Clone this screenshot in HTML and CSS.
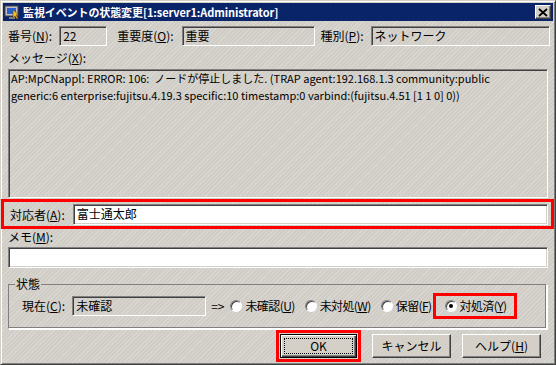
FILE: index.html
```html
<!DOCTYPE html>
<html lang="ja">
<head>
  <meta charset="UTF-8" />
  <title>監視イベントの状態変更</title>
  <link rel="stylesheet" href="styles.css">
</head>
<body>

<div class="window">
  <div class="titlebar">
    <svg class="app-icon" width="16" height="16" viewBox="0 0 16 16">
      <rect x="1" y="2" width="13" height="10" fill="#c0c0c0" stroke="#404040"/>
      <rect x="3" y="4" width="9" height="6" fill="#2a5fd0"/>
      <path d="M5 13h6v2H5z" fill="#808080"/>
      <path d="M9 6l5 4-2 1 2 3-1 1-2-3-2 2z" fill="#f0c020" stroke="#7a4a00" stroke-width="0.6"/>
    </svg>
    <span class="title">監視イベントの状態変更[1:server1:Administrator]</span>
    <span class="close-btn">
      <svg width="10" height="9" viewBox="0 0 10 9"><path d="M1 1l8 7M9 1L1 8" stroke="#000" stroke-width="1.8"/></svg>
    </span>
  </div>

  <div class="content">
    <div class="row top-row">
      <span class="lbl">番号(<u>N</u>):</span>
      <div class="field ro f-num">22</div>
      <span class="lbl lbl-sev">重要度(<u>O</u>):</span>
      <div class="field ro f-sev">重要</div>
      <span class="lbl lbl-kind">種別(<u>P</u>):</span>
      <div class="field ro f-kind">ネットワーク</div>
    </div>

    <div class="lbl caption">メッセージ(<u>X</u>):</div>
    <div class="field ro message">
      <div>AP:MpCNappl: ERROR: 106:&nbsp; ノードが停止しました. (TRAP agent:192.168.1.3 community:public</div>
      <div>generic:6 enterprise:fujitsu.4.19.3 specific:10 timestamp:0 varbind:(fujitsu.4.51 [1 1 0] 0))</div>
    </div>

    <div class="row owner-row marked">
      <span class="lbl">対応者(<u>A</u>):</span>
      <div class="field owner">富士通太郎</div>
    </div>

    <div class="lbl caption memo-cap">メモ(<u>M</u>):</div>
    <div class="field memo"></div>

    <fieldset class="group">
      <legend>状態</legend>
      <div class="row state-row">
        <span class="lbl">現在(<u>C</u>):</span>
        <div class="field ro f-state">未確認</div>
        <span class="arrow">=&gt;</span>
        <span class="radio-item"><span class="radio"></span>未確認(<u>U</u>)</span>
        <span class="radio-item"><span class="radio"></span>未対処(<u>W</u>)</span>
        <span class="radio-item"><span class="radio"></span>保留(<u>F</u>)</span>
        <span class="radio-item marked-radio"><span class="radio checked"></span>対処済(<u>Y</u>)</span>
      </div>
    </fieldset>

    <div class="buttons">
      <span class="marked-btn"><span class="btn default"><span class="focus">OK</span></span></span>
      <span class="btn">キャンセル</span>
      <span class="btn">ヘルプ(<u>H</u>)</span>
    </div>
  </div>
</div>

</body>
</html>
```

FILE: styles.css
```css
* {
  box-sizing: border-box;
}
body {
  margin: 0;
  font-family: "Noto Sans CJK JP", "DejaVu Sans", sans-serif;
  font-size: 12px;
  line-height: 14px;
  color: #000;
}
u {
  text-decoration: underline;
  text-underline-offset: 1px;
}
.window {
  width: 556px;
  height: 365px;
  background-color: #d4d0c8;
  background-image: repeating-linear-gradient(135deg, #dad7d2 0 1px, #d0cdc6 1px 3px);
  border: 1px solid;
  border-color: #d4d0c8 #404040 #404040 #d4d0c8;
  box-shadow: inset 1px 1px #fff, inset -1px -1px #808080;
  padding: 2px;
  display: flex;
  flex-direction: column;
  overflow: hidden;
}
.titlebar {
  height: 18px;
  flex-shrink: 0;
  background-color: #0a246a;
  display: flex;
  align-items: center;
  padding: 0 2px 0 1px;
}
.app-icon {
  flex-shrink: 0;
}
.title {
  color: #fff;
  font-weight: bold;
  font-size: 11px;
  letter-spacing: -0.1px;
  margin-left: 3px;
  flex-grow: 1;
  white-space: nowrap;
}
.close-btn {
  width: 16px;
  height: 14px;
  background-color: #d4d0c8;
  border: 1px solid;
  border-color: #fff #404040 #404040 #fff;
  box-shadow: inset -1px -1px #808080;
  display: flex;
  align-items: center;
  justify-content: center;
}
.content {
  padding: 5px 5px 0 5px;
  display: flex;
  flex-direction: column;
  flex-grow: 1;
}
.row {
  display: flex;
  align-items: center;
}
.lbl {
  white-space: nowrap;
}
.field {
  height: 20px;
  flex-shrink: 0;
  border: 1px solid;
  border-color: #808080 #fff #fff #808080;
  box-shadow: inset 1px 1px #404040, inset -1px -1px #d4d0c8;
  background-color: #fff;
  padding: 2px 3px;
  white-space: nowrap;
}
.field.ro {
  background-color: transparent;
}
.f-num {
  width: 48px;
  margin-left: 7px;
}
.lbl-sev {
  margin-left: 10px;
}
.f-sev {
  width: 133px;
  margin-left: 8px;
}
.lbl-kind {
  margin-left: 6px;
}
.f-kind {
  width: 179px;
  margin-left: 7px;
}
.caption {
  margin-top: 5px;
  height: 14px;
}
.message {
  height: 129px;
  margin-top: 4px;
  font-size: 11px;
  line-height: 17px;
  padding: 0 2px;
}
.marked {
  border: 3px solid #f00;
  margin: 1px -6px 0 -7px;
  padding: 2px 3px 1px 6px;
}
.owner {
  flex-grow: 1;
  height: 21px;
  margin-left: 8px;
}
.memo-cap {
  margin-top: 1px;
}
.memo {
  height: 21px;
  margin-top: 3px;
}
.group {
  margin: 9px 1px 0 0;
  padding: 2px 0 9px 13px;
  border: 1px solid;
  border-color: #808080 #fff #fff #808080;
  box-shadow: inset -1px -1px #808080, 1px 1px #fff;
  border-radius: 0;
  min-width: 0;
}
.group legend {
  padding: 0 1px;
  margin-left: -7px;
}
.state-row {
  height: 26px;
}
.f-state {
  width: 134px;
  margin-left: 7px;
}
.arrow {
  margin-left: 5px;
  margin-right: 6px;
}
.radio-item {
  display: inline-flex;
  align-items: center;
  margin-right: 10px;
  white-space: nowrap;
  letter-spacing: -0.6px;
}
.radio {
  width: 12px;
  height: 12px;
  flex-shrink: 0;
  border-radius: 50%;
  background-color: #fff;
  border: 1px solid;
  border-color: #808080 #fff #fff #808080;
  box-shadow: inset 1px 1px #404040;
  margin-right: 3px;
  display: flex;
  align-items: center;
  justify-content: center;
}
.radio.checked::after {
  content: "";
  width: 4px;
  height: 4px;
  border-radius: 50%;
  background-color: #000;
}
.marked-radio {
  border: 3px solid #f00;
  padding: 3px 8px 3px 9px;
  margin-left: -9px;
  margin-right: 0;
}
.buttons {
  display: flex;
  justify-content: flex-end;
  align-items: center;
  gap: 11px;
  margin-top: 1px;
  padding-right: 7px;
}
.btn {
  width: 79px;
  height: 24px;
  border: 1px solid;
  border-color: #fff #404040 #404040 #fff;
  box-shadow: inset -1px -1px #808080;
  background-color: #d4d0c8;
  display: flex;
  align-items: center;
  justify-content: center;
  white-space: nowrap;
}
.marked-btn {
  border: 3px solid #f00;
  padding: 1px;
}
.btn.default {
  width: 77px;
  border: 1px solid #000;
  box-shadow: inset 1px 1px #fff, inset -1px -1px #404040, inset -2px -2px #808080;
  padding: 3px;
}
.focus {
  width: 100%;
  height: 100%;
  border: 1px dotted #000;
  display: flex;
  align-items: center;
  justify-content: center;
}
```
